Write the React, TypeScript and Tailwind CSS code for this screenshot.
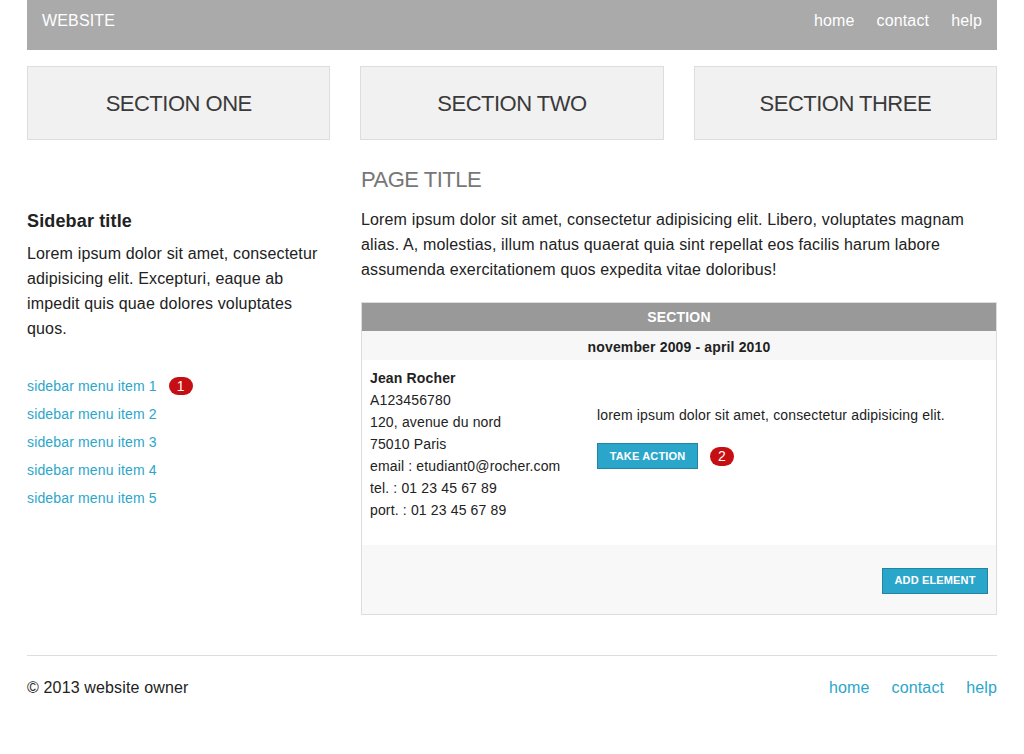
export default function App() {
  const menu = [1, 2, 3, 4, 5];
  return (
    <div className="min-h-screen bg-white font-['Liberation_Sans',Arial,sans-serif] tracking-[0.15px] text-[#222]">
      <div className="mx-auto w-[970px]">
        <header className="flex h-[50px] items-center justify-between bg-[#aaaaaa] px-[15px] text-[16px] text-white">
          <div className="pb-[9px]">WEBSITE</div>
          <nav className="flex gap-[22px] pb-[9px]">
            <a>home</a>
            <a>contact</a>
            <a>help</a>
          </nav>
        </header>

        <div className="mt-[16px] grid grid-cols-3 gap-[30px]">
          {["SECTION ONE", "SECTION TWO", "SECTION THREE"].map((s) => (
            <div
              key={s}
              className="flex h-[74px] items-center justify-center border border-[#dddddd] bg-[#f1f1f1] text-[22px] tracking-[-0.5px] text-[#3a3a3a]"
            >
              {s}
            </div>
          ))}
        </div>

        <div className="mt-[26px] flex gap-[31px]">
          <aside className="w-[303px] pt-[42px]">
            <h3 className="text-[18px] font-bold leading-[26px]">Sidebar title</h3>
            <p className="mt-[7px] text-[16px] leading-[25px] text-[#222]">
              Lorem ipsum dolor sit amet, consectetur adipisicing elit. Excepturi, eaque ab impedit quis quae dolores voluptates quos.
            </p>
            <ul className="mt-[31px] text-[14px] text-[#2ba6cb]">
              {menu.map((n) => (
                <li key={n} className="flex h-[28px] items-center">
                  <a>sidebar menu item {n}</a>
                  {n === 1 && (
                    <span className="ml-[12px] flex h-[18px] w-[24px] items-center justify-center rounded-full bg-[#c60f13] text-[14px] text-white">
                      1
                    </span>
                  )}
                </li>
              ))}
            </ul>
          </aside>

          <main className="flex-1">
            <h2 className="text-[22px] leading-[28px] tracking-[-0.5px] text-[#777]">PAGE TITLE</h2>
            <p className="mt-[13px] text-[16px] leading-[25px]">
              Lorem ipsum dolor sit amet, consectetur adipisicing elit. Libero, voluptates magnam alias. A, molestias, illum natus quaerat quia sint repellat eos facilis harum labore assumenda exercitationem quos expedita vitae doloribus!
            </p>

            <div className="mt-[20px] border border-[#dddddd]">
              <div className="flex h-[28px] items-center justify-center bg-[#999999] text-[14px] font-bold text-white">SECTION</div>
              <div className="flex h-[29px] items-center justify-center bg-[#f7f7f7] pt-[3px] text-[14px] font-bold">
                november 2009 - april 2010
              </div>
              <div className="flex px-[8px] pb-[24px] pt-[7px] text-[14px] leading-[22px]">
                <div className="w-[227px]">
                  <div className="font-bold">Jean Rocher</div>
                  <div>A123456780</div>
                  <div>120, avenue du nord</div>
                  <div>75010 Paris</div>
                  <div>email : etudiant0@rocher.com</div>
                  <div>tel. : 01 23 45 67 89</div>
                  <div>port. : 01 23 45 67 89</div>
                </div>
                <div className="pt-[37px]">
                  <p>lorem ipsum dolor sit amet, consectetur adipisicing elit.</p>
                  <div className="mt-[17px] flex items-center">
                    <button className="h-[26px] w-[101px] border border-[#2284a1] bg-[#2ba6cb] text-[11px] font-bold text-white">
                      TAKE ACTION
                    </button>
                    <span className="ml-[12px] flex h-[19px] w-[24px] items-center justify-center rounded-full bg-[#c60f13] text-[14px] text-white">
                      2
                    </span>
                  </div>
                </div>
              </div>
              <div className="flex h-[69px] items-center justify-end bg-[#f8f8f8] px-[8px] pt-[2px]">
                <button className="h-[26px] w-[106px] border border-[#2284a1] bg-[#2ba6cb] text-[11px] font-bold text-white">
                  ADD ELEMENT
                </button>
              </div>
            </div>
          </main>
        </div>

        <footer className="mt-[40px] flex items-center justify-between border-t border-[#dddddd] pt-[20px] text-[16px]">
          <div>© 2013 website owner</div>
          <nav className="flex gap-[22px] text-[#2ba6cb]">
            <a>home</a>
            <a>contact</a>
            <a>help</a>
          </nav>
        </footer>
      </div>
    </div>
  );
}
